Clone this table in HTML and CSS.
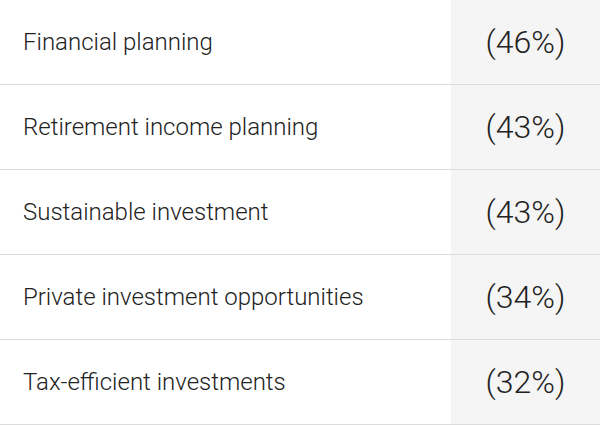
FILE: index.html
```html
<!DOCTYPE html>
<html>
<head>
<meta charset="utf-8">
<link rel="stylesheet" href="styles.css">
</head>
<body>
<div class="list">
  <div class="row"><div class="label">Financial planning</div><div class="value">(46%)</div></div>
  <div class="row"><div class="label">Retirement income planning</div><div class="value">(43%)</div></div>
  <div class="row"><div class="label">Sustainable investment</div><div class="value">(43%)</div></div>
  <div class="row"><div class="label">Private investment opportunities</div><div class="value">(34%)</div></div>
  <div class="row"><div class="label">Tax-efficient investments</div><div class="value">(32%)</div></div>
</div>
</body>
</html>
```
FILE: styles.css
```css
html, body {
  margin: 0;
  padding: 0;
  background: #fff;
}
.list {
  width: 600px;
  font-family: Roboto, "Liberation Sans", sans-serif;
  font-weight: 300;
  color: #222;
}
.row {
  display: grid;
  grid-template-columns: 451px 149px;
  height: 84px;
  border-bottom: 1px solid #dcdcdc;
}
.label {
  display: flex;
  align-items: center;
  padding-left: 23px;
  font-size: 24px;
}
.value {
  display: flex;
  align-items: center;
  justify-content: center;
  background: #f5f5f5;
  font-size: 32px;
}
```
